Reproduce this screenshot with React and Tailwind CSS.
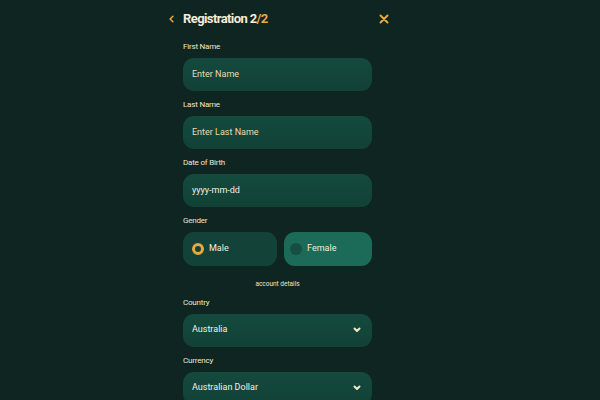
import React from "react";

function Chevron({ className }) {
  return (
    <svg viewBox="0 0 10 10" className={className} fill="none" stroke="currentColor" strokeWidth="2" strokeLinecap="round" strokeLinejoin="round">
      <path d="M2.5 3.5 5 6l2.5-2.5" />
    </svg>
  );
}

function Field({ label, children }) {
  return (
    <div className="flex flex-col">
      <div className="text-[8px] leading-none text-[#efe6c8] tracking-tight h-[15px]">{label}</div>
      {children}
    </div>
  );
}

function InputBox({ children, select }) {
  return (
    <div className="h-[33px] rounded-[11px] bg-gradient-to-b from-[#144a3e] to-[#124136] flex items-center px-[9px] justify-between">
      {children}
      {select && <Chevron className="w-[10px] h-[10px] text-[#f3e7c4] mr-[1px]" />}
    </div>
  );
}

export default function App() {
  return (
    <div className="w-[600px] h-[400px] bg-[#0f2521] flex flex-col overflow-hidden" style={{ fontFamily: "Roboto, 'Noto Sans', sans-serif" }}>
      <div className="flex-1 flex">
        <div className="w-[226px] ml-[166px] flex flex-col pt-[10px]">
          {/* header */}
          <div className="flex items-center h-[17px] pl-[2px] pr-[3px]">
            <svg viewBox="0 0 10 12" className="w-[7px] h-[10px] text-[#e8a93c]" fill="none" stroke="currentColor" strokeWidth="2.2" strokeLinecap="round" strokeLinejoin="round">
              <path d="M7 2 3 6l4 4" />
            </svg>
            <div className="ml-[8px] text-[13px] font-bold text-[#f3ecd6] tracking-[-0.6px] leading-none">
              Registration 2<span className="text-[#e8a93c]">/2</span>
            </div>
            <div className="flex-1" />
            <svg viewBox="0 0 10 10" className="w-[10px] h-[10px] text-[#e8a93c]" fill="none" stroke="currentColor" strokeWidth="2" strokeLinecap="round">
              <path d="M1.5 1.5l7 7M8.5 1.5l-7 7" />
            </svg>
          </div>

          <div className="flex flex-col gap-[10px] pl-[17px] pr-[20px] mt-[16px]">
            <Field label="First Name">
              <InputBox><span className="text-[9px] text-[#e9dcae]">Enter Name</span></InputBox>
            </Field>
            <Field label="Last Name">
              <InputBox><span className="text-[9px] text-[#e9dcae]">Enter Last Name</span></InputBox>
            </Field>
            <Field label="Date of Birth">
              <InputBox><span className="text-[9px] text-[#f5f0e4]">yyyy-mm-dd</span></InputBox>
            </Field>
            <Field label="Gender">
              <div className="flex gap-[7px]">
                <div className="flex-1 h-[34px] rounded-[11px] bg-[#134338] flex items-center px-[9px] gap-[5px]">
                  <div className="w-[12px] h-[12px] rounded-full border-[3px] border-[#e8a93c]" />
                  <span className="text-[9px] text-[#f3ecd6]">Male</span>
                </div>
                <div className="flex-1 h-[34px] rounded-[11px] bg-[#1b6b58] flex items-center px-[6px] gap-[5px]">
                  <div className="w-[12px] h-[12px] rounded-full bg-[#164e42]" />
                  <span className="text-[9px] text-[#f3ecd6]">Female</span>
                </div>
              </div>
            </Field>
          </div>

          <div className="text-[6.5px] text-[#efe6c8] text-center mt-[15px] pl-[17px] pr-[20px] leading-none">account details</div>

          <div className="flex flex-col gap-[10px] pl-[17px] pr-[20px] mt-[11px]">
            <Field label="Country">
              <InputBox select><span className="text-[9px] text-[#f5f0e4]">Australia</span></InputBox>
            </Field>
            <Field label="Currency">
              <InputBox select><span className="text-[9px] text-[#f5f0e4]">Australian Dollar</span></InputBox>
            </Field>
          </div>
        </div>
      </div>
      <div className="h-[4px] bg-[#2a302e] shrink-0" />
    </div>
  );
}
